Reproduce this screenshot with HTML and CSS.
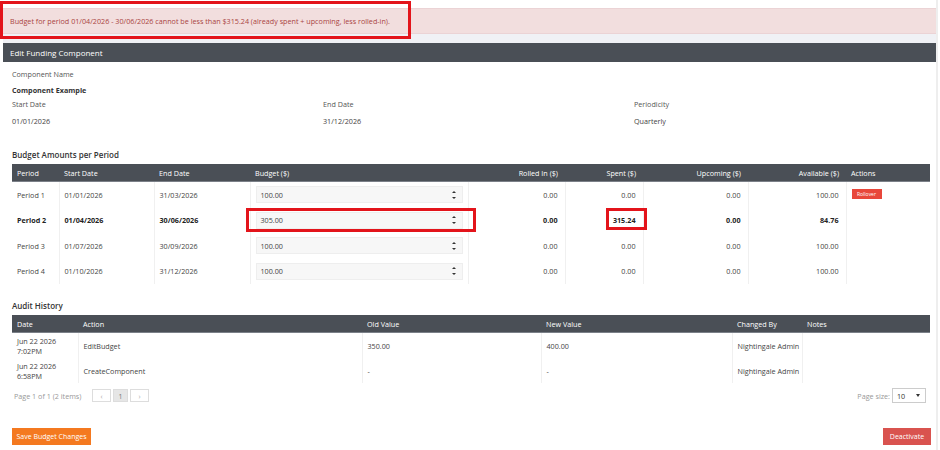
FILE: index.html
```html
<!DOCTYPE html>
<html>
<head>
<meta charset="utf-8">
<link rel="stylesheet" href="styles.css">
</head>
<body>
<div class="wrap">
  <div class="alert">Budget for period 01/04/2026 - 30/06/2026 cannot be less than $315.24 (already spent + upcoming, less rolled-in).</div>
  <div class="strip"></div>
  <div class="panel-heading">Edit Funding Component</div>
  <div class="panel-body">
    <div class="label first">Component Name</div>
    <div class="value-strong">Component Example</div>
    <div class="grid3">
      <div class="label">Start Date</div>
      <div class="label">End Date</div>
      <div class="label">Periodicity</div>
      <div class="val">01/01/2026</div>
      <div class="val">31/12/2026</div>
      <div class="val">Quarterly</div>
    </div>

    <h3 class="section budget-title">Budget Amounts per Period</h3>
    <table class="grid budget">
      <colgroup>
        <col style="width:47px"><col style="width:95px"><col style="width:96px"><col style="width:218px"><col style="width:97px"><col style="width:78px"><col style="width:105px"><col style="width:98px"><col style="width:84px">
      </colgroup>
      <thead>
        <tr><th>Period</th><th>Start Date</th><th>End Date</th><th>Budget ($)</th><th class="r">Rolled In ($)</th><th class="r">Spent ($)</th><th class="r">Upcoming ($)</th><th class="r">Available ($)</th><th>Actions</th></tr>
      </thead>
      <tbody>
        <tr><td>Period 1</td><td>01/01/2026</td><td>31/03/2026</td><td><div class="num-input"><span>100.00</span><span class="spin"><i class="up"></i><i class="down"></i></span></div></td><td class="r">0.00</td><td class="r">0.00</td><td class="r">0.00</td><td class="r">100.00</td><td><span class="btn-rollover">Rollover</span></td></tr>
        <tr class="bold"><td>Period 2</td><td>01/04/2026</td><td>30/06/2026</td><td><div class="num-input"><span>305.00</span><span class="spin"><i class="up"></i><i class="down"></i></span></div></td><td class="r">0.00</td><td class="r">315.24</td><td class="r">0.00</td><td class="r">84.76</td><td></td></tr>
        <tr><td>Period 3</td><td>01/07/2026</td><td>30/09/2026</td><td><div class="num-input"><span>100.00</span><span class="spin"><i class="up"></i><i class="down"></i></span></div></td><td class="r">0.00</td><td class="r">0.00</td><td class="r">0.00</td><td class="r">100.00</td><td></td></tr>
        <tr><td>Period 4</td><td>01/10/2026</td><td>31/12/2026</td><td><div class="num-input"><span>100.00</span><span class="spin"><i class="up"></i><i class="down"></i></span></div></td><td class="r">0.00</td><td class="r">0.00</td><td class="r">0.00</td><td class="r">100.00</td><td></td></tr>
      </tbody>
    </table>

    <h3 class="section audit-title">Audit History</h3>
    <table class="grid audit">
      <colgroup>
        <col style="width:66px"><col style="width:284px"><col style="width:179px"><col style="width:191px"><col style="width:70px"><col style="width:128px">
      </colgroup>
      <thead>
        <tr><th>Date</th><th>Action</th><th>Old Value</th><th>New Value</th><th>Changed By</th><th>Notes</th></tr>
      </thead>
      <tbody>
        <tr><td class="date"><span class="dline">Jun 22 2026</span><span class="dline">7:02PM</span></td><td>EditBudget</td><td>350.00</td><td>400.00</td><td>Nightingale Admin</td><td></td></tr>
        <tr><td class="date"><span class="dline">Jun 22 2026</span><span class="dline">6:58PM</span></td><td>CreateComponent</td><td>-</td><td>-</td><td>Nightingale Admin</td><td></td></tr>
      </tbody>
    </table>
    <div class="pager">
      <span class="pager-info">Page 1 of 1 (2 items)</span>
      <span class="pager-btns">
        <span class="pbtn">&#8249;</span><span class="pbtn cur">1</span><span class="pbtn">&#8250;</span>
      </span>
      <span class="spacer"></span>
      <span class="psize-label">Page size:</span>
      <span class="psize">10<i class="caret"></i></span>
    </div>
    <div class="actions">
      <span class="btn btn-save">Save Budget Changes</span>
      <span class="btn btn-deact">Deactivate</span>
    </div>
  </div>
</div>
<div class="mark mark-alert"></div>
<div class="mark mark-budget"></div>
<div class="mark mark-spent"></div>
</body>
</html>
```

FILE: styles.css
```css
html, body {
  margin: 0;
  padding: 0;
  background: #ffffff;
}
body {
  font-family: "Open Sans", "Noto Sans", "DejaVu Sans", sans-serif;
  font-size: 7.2px;
  color: #333333;
  width: 940px;
  height: 450px;
  overflow: hidden;
  position: relative;
}
.wrap {
  margin-left: 3px;
  width: 935px;
  border-right: 2px solid #eeeeee;
  height: 450px;
  padding-top: 8px;
  box-sizing: border-box;
}
.alert {
  height: 26px;
  box-sizing: border-box;
  background: #f2dede;
  border-top: 1px solid #ebd3d5;
  border-bottom: 1px solid #ebd3d5;
  color: #a94442;
  padding-left: 7px;
  line-height: 24px;
}
.strip {
  height: 9px;
  background: #f0f1f5;
}
.panel-heading {
  height: 19px;
  background: #4a4f56;
  color: #ffffff;
  font-size: 8px;
  line-height: 19px;
  padding-left: 7px;
}
.panel-body {
  padding: 0 8px 0 9px;
}
.label {
  color: #555555;
  line-height: 12px;
}
.label.first {
  margin-top: 6px;
}
.value-strong {
  font-weight: 700;
  line-height: 12px;
  margin-top: 4px;
}
.grid3 {
  display: grid;
  grid-template-columns: 311px 311px 1fr;
  row-gap: 5px;
  margin-top: 2px;
}
.val {
  line-height: 12px;
  color: #444444;
}
.section {
  margin: 0;
  font-size: 8px;
  font-weight: 600;
  line-height: 12px;
  color: #333333;
}
.budget-title {
  margin-top: 22px;
  margin-bottom: 3px;
}
.audit-title {
  margin-top: 16px;
  margin-bottom: 3px;
}
table.grid {
  border-collapse: collapse;
  table-layout: fixed;
  width: 918px;
}
table.grid th {
  background: #4a4f56;
  color: #ffffff;
  font-weight: 400;
  text-align: left;
  height: 17px;
  padding: 0 5px;
  border-bottom: 1px solid #7b8088;
  white-space: nowrap;
}
table.grid td {
  padding: 0 5px;
  border-left: 1px solid #f0f0f0;
  color: #444444;
  white-space: nowrap;
}
table.grid td:first-child {
  border-left: none;
}
table.grid .r {
  text-align: right;
  padding-right: 7px;
}
table.budget td {
  height: 25.5px;
}
table.budget tr.bold td {
  font-weight: 700;
  color: #222222;
}
.num-input {
  height: 17px;
  box-sizing: border-box;
  background: #f7f7f7;
  border: 1px solid #eeeeee;
  display: flex;
  align-items: center;
  justify-content: space-between;
  padding: 0 6px 0 4px;
  font-weight: 400;
  color: #444444;
}
.spin {
  display: flex;
  flex-direction: column;
  gap: 4px;
}
.spin i {
  display: block;
  width: 0;
  height: 0;
  border-left: 2.5px solid transparent;
  border-right: 2.5px solid transparent;
}
.spin i.up {
  border-bottom: 2.5px solid #333333;
}
.spin i.down {
  border-top: 2.5px solid #333333;
}
.btn-rollover {
  display: inline-block;
  width: 30px;
  height: 10px;
  line-height: 10px;
  background: #e8473b;
  color: #ffffff;
  font-size: 5px;
  text-align: center;
  vertical-align: middle;
  margin-top: -4px;
}
table.audit td {
  height: 25px;
}
table.audit td.date {
  line-height: 10px;
  color: #444444;
}
.dline {
  display: block;
  color: #444444;
}
.pager {
  display: flex;
  align-items: center;
  height: 15px;
  margin-top: 5px;
}
.pager-info {
  color: #999999;
  margin-left: 2px;
  width: 78px;
}
.pager-btns {
  display: flex;
  gap: 2px;
}
.pbtn {
  display: inline-block;
  height: 13px;
  line-height: 13px;
  width: 19px;
  box-sizing: border-box;
  border: 1px solid #dddddd;
  background: #ffffff;
  color: #aaaaaa;
  text-align: center;
  font-size: 7px;
}
.pbtn.cur {
  width: 15px;
  background: #e6e6e6;
  color: #777777;
}
.spacer {
  flex: 1;
}
.psize-label {
  color: #999999;
  margin-right: 2px;
}
.psize {
  display: inline-flex;
  align-items: center;
  justify-content: space-between;
  width: 34px;
  height: 15px;
  box-sizing: border-box;
  border: 1px solid #cccccc;
  padding: 0 5px 0 4px;
  margin-right: 2px;
  color: #333333;
}
.caret {
  width: 0;
  height: 0;
  border-left: 2.5px solid transparent;
  border-right: 2.5px solid transparent;
  border-top: 3px solid #333333;
}
.actions {
  display: flex;
  justify-content: space-between;
  margin-top: 25px;
  margin-right: -3px;
}
.btn {
  display: inline-block;
  height: 17px;
  line-height: 17px;
  color: #ffffff;
  text-align: center;
  font-size: 7px;
}
.btn-save {
  width: 79px;
  background: #f47920;
}
.btn-deact {
  width: 48px;
  background: #d9534f;
}
.mark {
  position: absolute;
  border: 3px solid #e3141b;
  box-sizing: border-box;
}
.mark-alert {
  left: 0;
  top: 1px;
  width: 411px;
  height: 38px;
}
.mark-budget {
  left: 246px;
  top: 208px;
  width: 230px;
  height: 24px;
}
.mark-spent {
  left: 606px;
  top: 208px;
  width: 41px;
  height: 22px;
}
```
